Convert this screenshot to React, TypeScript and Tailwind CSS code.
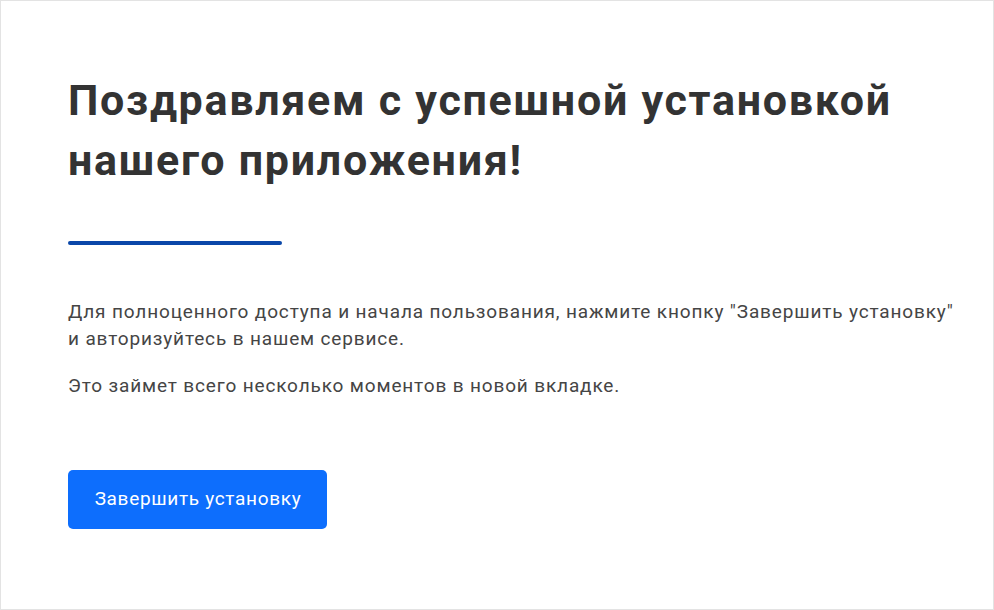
export default function App() {
  return (
    <div className="w-[994px] h-[610px] bg-white border border-[#e3e3e3] box-border" style={{ fontFamily: "Roboto, 'Noto Sans', sans-serif" }}>
      <div className="pl-[67px] pr-[20px] pt-[69px]">
        <h1 className="text-[43px] leading-[60px] font-bold text-[#333333] tracking-[1.72px] whitespace-nowrap">
          Поздравляем с успешной установкой
          <br />
          нашего приложения!
        </h1>
        <div className="mt-[51px] w-[214px] h-[4px] rounded-full bg-[#0a47a9]" />
        <div className="mt-[53px] text-[19px] leading-[27px] text-[#454545] tracking-[0.85px] whitespace-nowrap">
          <p>
            Для полноценного доступа и начала пользования, нажмите кнопку "Завершить установку"
            <br />
            и авторизуйтесь в нашем сервисе.
          </p>
          <p className="mt-[20px]">Это займет всего несколько моментов в новой вкладке.</p>
        </div>
        <button className="mt-[71px] w-[259px] h-[59px] rounded-[5px] bg-[#0d6efd] text-white text-[19px] tracking-[0.68px] pl-[1px]">
          Завершить установку
        </button>
      </div>
    </div>
  );
}
